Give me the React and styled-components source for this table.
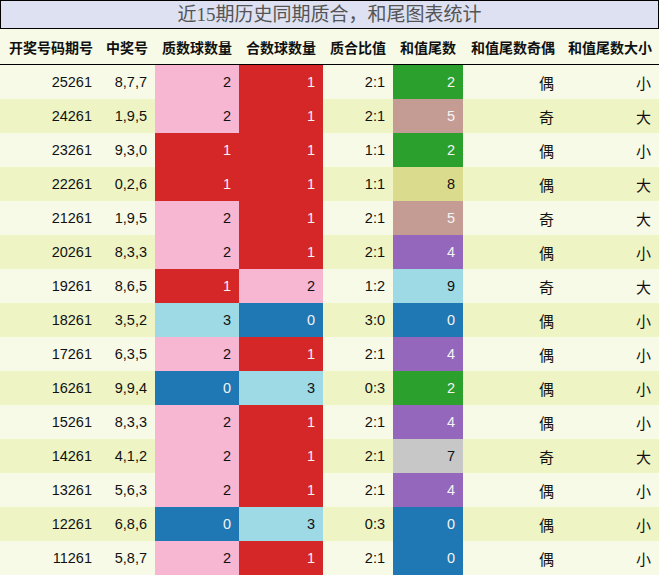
import React from "react";
import styled, { createGlobalStyle } from "styled-components";

const Global = createGlobalStyle`
  html, body { margin: 0; padding: 0; background: #ffffff; }
  body { font-family: "Liberation Sans", "Noto Sans CJK SC", sans-serif; }
`;

const COLS = "100px 55px 84px 84px 70px 70px 99px 97px";

const Wrap = styled.div`
  width: 659px;
`;

const Title = styled.div`
  height: 27px;
  border: 1px solid #000;
  background: #dde1f1;
  color: #555;
  font-size: 19px;
  line-height: 27px;
  text-align: center;
  font-family: "Liberation Serif", "Noto Sans CJK SC", serif;
`;

const HeadRow = styled.div`
  display: grid;
  grid-template-columns: ${COLS};
  height: 35px;
  background: #f8fae8;
  border-bottom: 1px solid #000;
`;

const HeadCell = styled.div`
  display: flex;
  align-items: center;
  justify-content: flex-end;
  padding: 0 7px 0 0;
  font-size: 14px;
  font-weight: bold;
  color: #111;
  white-space: nowrap;
  font-family: "Noto Sans CJK SC", sans-serif;
`;

const Row = styled.div`
  display: grid;
  grid-template-columns: ${COLS};
  height: 34px;
  background: ${(p) => (p.$alt ? "#eff4c4" : "#f8fae8")};
`;

const Cell = styled.div`
  display: flex;
  align-items: center;
  justify-content: flex-end;
  padding-right: 8px;
  font-size: 14.5px;
  color: ${(p) => (p.$light ? "#f4f4f4" : "#111")};
  background: ${(p) => p.$bg || "transparent"};
  white-space: nowrap;
`;

const CjkCell = styled(Cell)`
  font-family: "Noto Sans CJK SC", sans-serif;
  font-size: 15px;
`;

const COUNT = {
  0: ["#1f77b4", true],
  1: ["#d62728", true],
  2: ["#f7b6d2", false],
  3: ["#9edae5", false],
};

const TAIL = {
  0: ["#1f77b4", true],
  2: ["#2ca02c", true],
  4: ["#9467bd", true],
  5: ["#c49c94", true],
  7: ["#c7c7c7", false],
  8: ["#dbdb8d", false],
  9: ["#9edae5", false],
};

const rows = [
  ["25261", "8,7,7", 2, 1, "2:1", 2, "偶", "小"],
  ["24261", "1,9,5", 2, 1, "2:1", 5, "奇", "大"],
  ["23261", "9,3,0", 1, 1, "1:1", 2, "偶", "小"],
  ["22261", "0,2,6", 1, 1, "1:1", 8, "偶", "大"],
  ["21261", "1,9,5", 2, 1, "2:1", 5, "奇", "大"],
  ["20261", "8,3,3", 2, 1, "2:1", 4, "偶", "小"],
  ["19261", "8,6,5", 1, 2, "1:2", 9, "奇", "大"],
  ["18261", "3,5,2", 3, 0, "3:0", 0, "偶", "小"],
  ["17261", "6,3,5", 2, 1, "2:1", 4, "偶", "小"],
  ["16261", "9,9,4", 0, 3, "0:3", 2, "偶", "小"],
  ["15261", "8,3,3", 2, 1, "2:1", 4, "偶", "小"],
  ["14261", "4,1,2", 2, 1, "2:1", 7, "奇", "大"],
  ["13261", "5,6,3", 2, 1, "2:1", 4, "偶", "小"],
  ["12261", "6,8,6", 0, 3, "0:3", 0, "偶", "小"],
  ["11261", "5,8,7", 2, 1, "2:1", 0, "偶", "小"],
];

const headers = [
  "开奖号码期号",
  "中奖号",
  "质数球数量",
  "合数球数量",
  "质合比值",
  "和值尾数",
  "和值尾数奇偶",
  "和值尾数大小",
];

export default function App() {
  return (
    <Wrap>
      <Global />
      <Title>近15期历史同期质合，和尾图表统计</Title>
      <HeadRow>
        {headers.map((h) => (
          <HeadCell key={h}>{h}</HeadCell>
        ))}
      </HeadRow>
      {rows.map((r, i) => {
        const [p, c, pr, co, ratio, tail, oe, bs] = r;
        return (
          <Row key={p} $alt={i % 2 === 1}>
            <Cell>{p}</Cell>
            <Cell>{c}</Cell>
            <Cell $bg={COUNT[pr][0]} $light={COUNT[pr][1]}>{pr}</Cell>
            <Cell $bg={COUNT[co][0]} $light={COUNT[co][1]}>{co}</Cell>
            <Cell>{ratio}</Cell>
            <Cell $bg={TAIL[tail][0]} $light={TAIL[tail][1]}>{tail}</Cell>
            <CjkCell>{oe}</CjkCell>
            <CjkCell>{bs}</CjkCell>
          </Row>
        );
      })}
    </Wrap>
  );
}
